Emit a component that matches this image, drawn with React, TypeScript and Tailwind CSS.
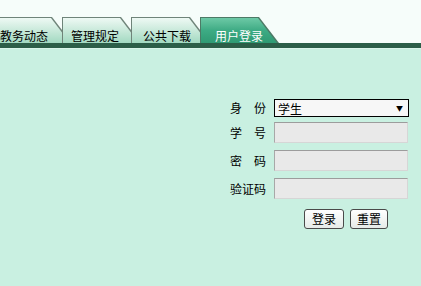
const FONT = "font-['SimSun','Noto_Sans_CJK_SC',sans-serif]";

const tabs = [
  { label: "教务动态", pad: "pl-[7px]", first: true },
  { label: "管理规定", pad: "pl-[9px]" },
  { label: "公共下载", pad: "pl-[12px]" },
  { label: "用户登录", pad: "pl-[15px]", active: true },
];

function Tab({ label, pad, first, active }: { label: string; pad: string; first?: boolean; active?: boolean }) {
  return (
    <div
      className={`relative h-[26px] w-[79px] shrink-0 ${first ? "-ml-[7px]" : "-ml-[10px]"} [clip-path:polygon(0_0,calc(100%_-_20px)_0,100%_100%,0_100%)] ${active ? "bg-[#4d7a66]" : "bg-[#6f8479]"}`}
    >
      <div
        className={`absolute inset-[1px_0_0_1px] [clip-path:polygon(0_0,calc(100%_-_21px)_0,calc(100%_-_2px)_100%,0_100%)] ${active ? "bg-gradient-to-b from-[#6cc9a6] via-[#3dab84] to-[#2f9a73]" : "bg-gradient-to-b from-[#eef9f4] to-[#a2d9c1]"}`}
      />
      <div className={`relative ${pad} pt-[12px] text-[12px] leading-[14px] whitespace-nowrap ${active ? "text-white" : "text-black"}`}>
        {label}
      </div>
    </div>
  );
}

export default function App() {
  return (
    <div className={`w-[421px] h-[286px] overflow-hidden bg-[#c9f0e1] ${FONT}`}>
      {/* tab strip */}
      <div className="bg-[#f6fdfa] pt-[17px] flex overflow-hidden">
        {tabs.map((t) => (
          <Tab key={t.label} {...t} />
        ))}
      </div>
      <div className="h-[5px] bg-[#2c5e48]" />
      <div className="h-[1px] bg-[#d9f5ea]" />

      {/* login form */}
      <div className="flex justify-end pr-[12px] pt-[50px]">
        <div className="flex flex-col text-[12px] text-black">
          <div className="flex items-center gap-[8px] h-[18px]">
            <span className="w-[37px] text-right leading-[14px]">身　份</span>
            <div className="w-[135px] h-[18px] border border-black bg-[#f7f7f7] flex items-center justify-between pl-[3px] pr-[5px]">
              <span className="leading-[14px] pt-[1px]">学生</span>
              <span className="text-[7px] leading-none">▼</span>
            </div>
          </div>
          {["学　号", "密　码", "验证码"].map((l, i) => (
            <div key={l} className={`flex items-center gap-[8px] ${i === 0 ? "mt-[5px]" : "mt-[7px]"}`}>
              <span className="w-[37px] text-right leading-[14px]">{l}</span>
              <div className="w-[134px] h-[21px] bg-[#e9e9e9] border border-t-[#9c9c9c] border-l-[#a8a8a8] border-r-[#d6d6d6] border-b-[#d6d6d6]" />
            </div>
          ))}
          <div className="flex gap-[6px] mt-[10px] ml-[75px]">
            <button className="w-[40px] h-[20px] rounded-[3px] border border-[#4a4a4a] bg-gradient-to-b from-white to-[#e6ebe8] text-[12px] leading-none">
              登录
            </button>
            <button className="w-[38px] h-[20px] rounded-[3px] border border-[#4a4a4a] bg-gradient-to-b from-white to-[#e6ebe8] text-[12px] leading-none">
              重置
            </button>
          </div>
        </div>
      </div>
    </div>
  );
}
